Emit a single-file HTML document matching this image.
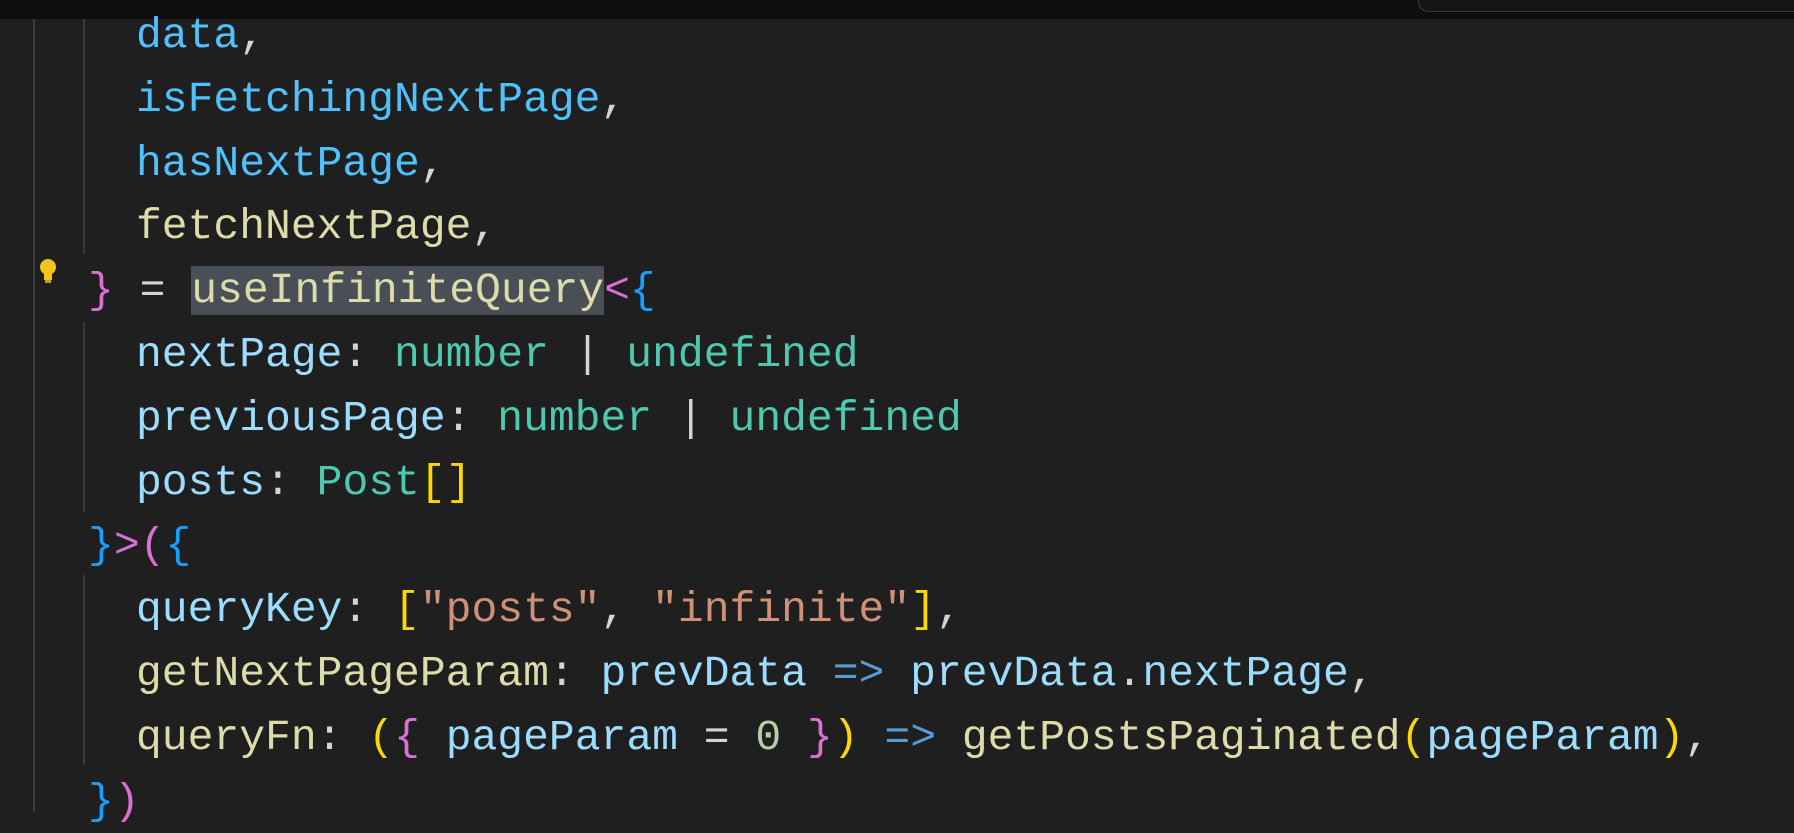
<!DOCTYPE html>
<html><head><style>
html,body{margin:0;padding:0;background:#1f1f1f;width:1794px;height:812px;overflow:hidden}
.top{position:absolute;left:0;top:0;width:1794px;height:19px;background:#0e0e0e}
.pill{position:absolute;left:1418px;top:-20px;width:420px;height:30px;border:1px solid #3a3a3a;border-radius:10px;background:#151515}
.g{position:absolute;width:2px;background:#3b3b3b}
.code{position:absolute;left:0;top:4px;font-family:"Liberation Mono",monospace;font-size:43px;line-height:63.8px;color:#d4d4d4}
.l{height:63.8px;white-space:pre;padding-left:136px}
.b{padding-left:88px}
.v{color:#4fc1ff}.p{color:#9cdcfe}.f{color:#dcdcaa}.t{color:#4ec9b0}.pk{color:#da70d6}.bl{color:#179fff}.y{color:#ffd700}.s{color:#ce9178}.n{color:#b5cea8}.k{color:#569cd6}
.sel{background:#4a4f57}
</style></head><body>
<div class="top"></div><div class="pill"></div>
<div class="g" style="left:33px;top:19px;height:793px"></div>
<div class="g" style="left:83px;top:19px;height:235px"></div>
<div class="g" style="left:83px;top:322px;height:190px"></div>
<div class="g" style="left:83px;top:575px;height:190px"></div>
<svg style="position:absolute;left:38px;top:258px" width="20" height="28" viewBox="0 0 20 28"><circle cx="10" cy="9" r="8" fill="#f0c419"/><rect x="6" y="14" width="8" height="8" fill="#f0c419"/><rect x="7" y="22" width="6" height="3" fill="#c9a012"/></svg>
<div class="code">
<div class="l"><span class="v">data</span>,</div>
<div class="l"><span class="v">isFetchingNextPage</span>,</div>
<div class="l"><span class="v">hasNextPage</span>,</div>
<div class="l"><span class="f">fetchNextPage</span>,</div>
<div class="l b"><span class="pk">}</span> = <span class="f sel">useInfiniteQuery</span><span class="pk">&lt;</span><span class="bl">{</span></div>
<div class="l"><span class="p">nextPage</span>: <span class="t">number</span> | <span class="t">undefined</span></div>
<div class="l"><span class="p">previousPage</span>: <span class="t">number</span> | <span class="t">undefined</span></div>
<div class="l"><span class="p">posts</span>: <span class="t">Post</span><span class="y">[]</span></div>
<div class="l b"><span class="bl">}</span><span class="pk">&gt;(</span><span class="bl">{</span></div>
<div class="l"><span class="p">queryKey</span>: <span class="y">[</span><span class="s">"posts"</span>, <span class="s">"infinite"</span><span class="y">]</span>,</div>
<div class="l"><span class="f">getNextPageParam</span>: <span class="p">prevData</span> <span class="k">=&gt;</span> <span class="p">prevData</span>.<span class="p">nextPage</span>,</div>
<div class="l"><span class="f">queryFn</span>: <span class="y">(</span><span class="pk">{</span> <span class="p">pageParam</span> = <span class="n">0</span> <span class="pk">}</span><span class="y">)</span> <span class="k">=&gt;</span> <span class="f">getPostsPaginated</span><span class="y">(</span><span class="p">pageParam</span><span class="y">)</span>,</div>
<div class="l b"><span class="bl">}</span><span class="pk">)</span></div>
</div>
</body></html>
